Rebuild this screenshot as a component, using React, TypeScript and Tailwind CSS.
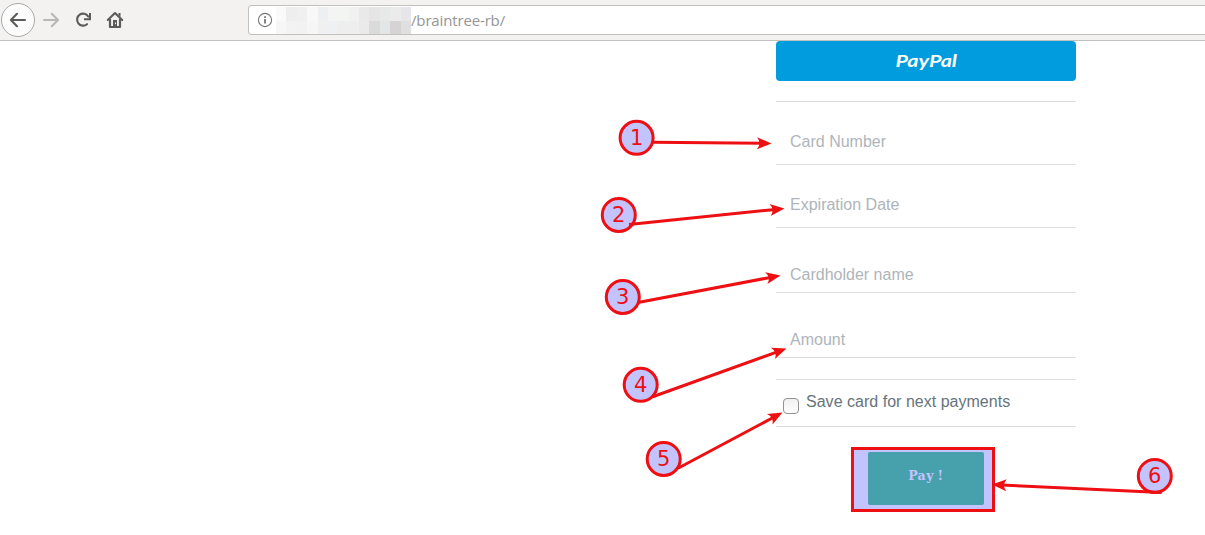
import React from "react";

const mosaic = [
  "bg-[#fafafa]", "bg-[#eeeeee]", "bg-[#f0f0f0]", "bg-[#f8f8f8]", "bg-[#eeeff0]", "bg-[#f4f4f5]", "bg-[#f3f5f3]", "bg-[#f0f1f0]", "bg-[#e9e9e9]", "bg-[#e5e5e6]", "bg-[#e7e8e8]", "bg-[#ebebeb]", "bg-[#e6e6ea]",
  "bg-[#f6f6f6]", "bg-[#f3f3f3]", "bg-[#f2f2f2]", "bg-[#f6f6f6]", "bg-[#f0f0f0]", "bg-[#eef0f3]", "bg-[#eeeeee]", "bg-[#eeeeee]", "bg-[#eaeaea]", "bg-[#dadada]", "bg-[#e3e6e7]", "bg-[#d5d3d3]", "bg-[#dfdfdf]",
];

function Toolbar() {
  return (
    <header className="flex h-[41px] items-start border-b border-[#c2c0bd] bg-[#f3f2f0]">
      <svg className="h-10 w-[248px] shrink-0" viewBox="0 0 248 40" fill="none">
        <circle cx="18" cy="20" r="16.5" fill="#fcfcfc" stroke="#aaa9a7" />
        <path d="M25 20H11.5M17 13.8L10.9 20l6.1 6.2" stroke="#5b5b59" strokeWidth="2.1" strokeLinecap="round" strokeLinejoin="round" />
        <path d="M44 20h13.5M51.8 13.8L58 20l-6.2 6.2" stroke="#b9b8b6" strokeWidth="2.1" strokeLinecap="round" strokeLinejoin="round" />
        <path d="M88.2 16.5A6 6 0 1 0 87 24.2" stroke="#5b5b59" strokeWidth="2.1" strokeLinecap="round" />
        <path d="M90 13v6.2h-6" stroke="#5b5b59" strokeWidth="2" />
        <path d="M107.8 20L115 13l7.2 7" stroke="#5b5b59" strokeWidth="2.1" strokeLinecap="round" strokeLinejoin="round" />
        <path d="M110 19v8h10v-8" stroke="#5b5b59" strokeWidth="2.2" strokeLinejoin="round" />
        <path d="M118.5 13h2v4l-2-2z" fill="#5b5b59" />
        <path d="M113 27v-7h4v7z" fill="#5b5b59" />
        <path d="M115.5 22.5v1.7" stroke="#f3f2f0" strokeWidth="1" />
      </svg>
      <div className="mt-[5px] flex h-[30px] flex-1 items-start rounded-l-[4px] border border-r-0 border-[#c3c1be] bg-white">
        <svg className="ml-[8px] mt-[6px] size-4 shrink-0" viewBox="0 0 16 16" fill="none">
          <circle cx="8" cy="8" r="6.6" stroke="#777" strokeWidth="1.1" />
          <path d="M8 7v4.5M8 4.2v1.7" stroke="#777" strokeWidth="1.8" />
        </svg>
        <div className="ml-[3px] mt-px grid h-[27px] w-[135px] shrink-0 grid-cols-13 grid-rows-2">
          {mosaic.map((tone, i) => (
            <span key={i} className={tone} />
          ))}
        </div>
        <span className="mt-[4px] font-['Open_Sans',sans-serif] text-[15px] leading-5 tracking-[-0.15px] text-[#969696]">/braintree-rb/</span>
      </div>
    </header>
  );
}

function Field({ label, className }: { label: string; className: string }) {
  return (
    <div className={`flex items-end border-b border-[#dedede] pl-[14px] text-[16px] leading-[18px] text-[#aeb5ba] ${className}`}>
      <span>{label}</span>
    </div>
  );
}

const markers = [
  { x: 636.6, y: 137.8, from: [652, 142.3], to: [771.5, 143.4] },
  { x: 618.8, y: 214.9, from: [629, 224.5], to: [784.5, 208.5] },
  { x: 622.8, y: 297, from: [638, 302.5], to: [780.5, 275.5] },
  { x: 640.7, y: 384.8, from: [652, 397], to: [786.5, 348.5] },
  { x: 663.7, y: 458.9, from: [678, 468.3], to: [782.5, 412.5] },
  { x: 1154.8, y: 475.9, from: [1161.5, 492.5], to: [992, 484.6] },
];

function Annotations() {
  return (
    <svg className="pointer-events-none absolute inset-0 h-[535px] w-[1205px]" viewBox="0 0 1205 535">
      {markers.map(({ x, y, from, to }, i) => {
        const dx = to[0] - from[0];
        const dy = to[1] - from[1];
        const length = Math.hypot(dx, dy);
        const angle = (Math.atan2(dy, dx) * 180) / Math.PI;
        return (
          <g key={i}>
            <circle cx={x} cy={y} r="16.5" fill="#c3c3ff" stroke="#ee0f12" strokeWidth="3" />
            <g transform={`translate(${from[0]} ${from[1]}) rotate(${angle})`}>
              <path d={`M0 0H${length - 9}`} stroke="#ee0f12" strokeWidth="3" />
              <path d={`M${length} 0l-14.5 6q5-6 0-12z`} fill="#ee0f12" />
            </g>
            <text x={x} y={y + 7} textAnchor="middle" fill="#ee0f12" className="font-['DejaVu_Sans',sans-serif] text-[21px]">
              {i + 1}
            </text>
          </g>
        );
      })}
    </svg>
  );
}

export default function App() {
  return (
    <div className="relative h-[535px] w-[1205px] overflow-hidden bg-white font-['Liberation_Sans',sans-serif]">
      <Toolbar />
      <main className="ml-[776px] flex w-[300px] flex-col">
        <button className="flex h-10 items-center justify-center rounded-[4px] bg-[#009cde]" aria-label="PayPal">
          <svg className="h-10 w-[80px]" viewBox="0 0 80 40">
            <text x="9.5" y="26" textLength="61.5" lengthAdjust="spacingAndGlyphs" fill="white" className="font-['Lato',sans-serif] text-[17.5px] font-bold italic">PayPal</text>
          </svg>
        </button>
        <div className="mt-5 border-t border-[#dedede]" />
        <Field label="Card Number" className="h-[63px] pb-[13px]" />
        <Field label="Expiration Date" className="h-[63px] pb-[13px]" />
        <Field label="Cardholder name" className="h-[65px] pb-[8px]" />
        <Field label="Amount" className="h-[65px] pb-[8px]" />
        <label className="mt-[21px] flex h-[48px] items-start border-y border-[#dedede] pl-[7px]">
          <input type="checkbox" className="mt-[18px] size-4 shrink-0 appearance-none rounded-[4px] border border-[#929292] bg-linear-to-b from-[#f0f0f0] to-white" />
          <span className="ml-[7px] mt-[13px] whitespace-nowrap text-[16px] leading-[18px] tracking-[0.02px] text-[#67747c]">Save card for next payments</span>
        </label>
        <div className="ml-[75px] mt-5 flex h-[65px] w-[144px] border-3 border-[#ee0f12] bg-[#c3c3ff] pl-[14px] pt-[2px]">
          <button className="flex h-[53px] w-[116px] rounded-[2px] bg-[#47a1ad]" aria-label="Pay!">
            <svg className="h-[53px] w-[116px]" viewBox="0 0 116 53">
              <text x="40.2 49.6 58.3 69.6" y="28.3" fill="#c3c3ff" className="font-['DejaVu_Serif',serif] text-[12.5px] font-bold">Pay!</text>
            </svg>
          </button>
        </div>
      </main>
      <Annotations />
    </div>
  );
}
